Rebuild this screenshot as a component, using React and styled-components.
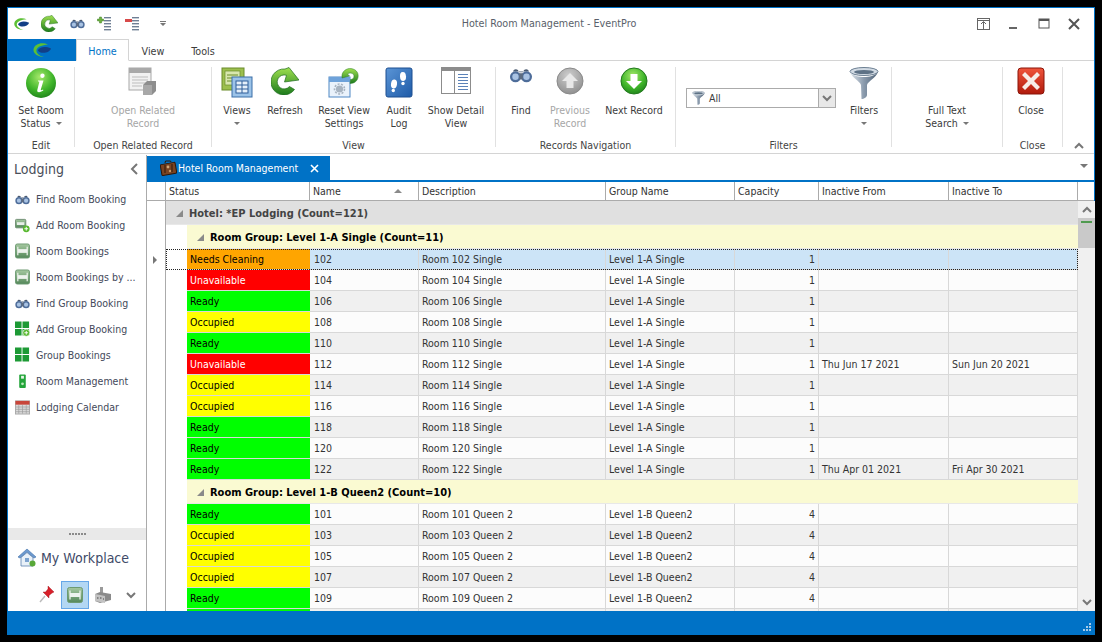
import React from 'react'
import styled, { createGlobalStyle } from 'styled-components'

const Global = createGlobalStyle`
  html, body { margin: 0; padding: 0; background: #000; }
  body { font-family: "DejaVu Sans Condensed", "DejaVu Sans", "Liberation Sans", sans-serif; font-size: 10.5px; color: #3c3c3c; }
`

const BLUE = '#0072c6'

const Page = styled.div`
  width: 1102px;
  height: 642px;
  padding: 7px;
  box-sizing: border-box;
  background: #000;
  overflow: hidden;
`

const Win = styled.div`
  width: 1088px;
  height: 628px;
  box-sizing: border-box;
  border: 1px solid ${BLUE};
  background: #fff;
  display: flex;
  flex-direction: column;
`

const TitleBar = styled.div`
  height: 31px;
  flex: none;
  display: grid;
  grid-template-columns: 1fr auto 1fr;
  align-items: center;
`

const Qat = styled.div`
  display: flex;
  align-items: center;
  gap: 8px;
  padding-left: 3px;
`

const QatSlot = styled.span`
  width: 20px;
  height: 20px;
  display: flex;
  align-items: center;
  justify-content: center;
  margin-left: ${p => p.$nudge || 0}px;
`

const Title = styled.div`
  font-size: 10.7px;
  color: #5a5f6a;
  margin-right: 4px;
`

const WinControls = styled.div`
  display: flex;
  justify-content: flex-end;
  align-items: center;
  gap: 10px;
  padding-right: 10px;
`

const TabRow = styled.div`
  height: 21px;
  flex: none;
  display: flex;
  border-bottom: 1px solid #d4d4d4;
  box-sizing: content-box;
`

const AppButton = styled.div`
  width: 68px;
  height: 22px;
  background: ${BLUE};
  display: flex;
  align-items: center;
  justify-content: center;
`

const RibbonTab = styled.div`
  width: ${p => p.$w}px;
  height: 22px;
  box-sizing: border-box;
  padding-top: 2px;
  display: flex;
  align-items: center;
  justify-content: center;
  font-size: 10.7px;
  color: ${p => (p.$on ? BLUE : '#3c3c3c')};
  ${p => p.$on && `
    border: 1px solid #d4d4d4;
    border-bottom: 1px solid #fff;
    background: #fff;
  `}
`

const Ribbon = styled.div`
  height: 92px;
  flex: none;
  display: flex;
  border-bottom: 1px solid #d4d4d4;
`

const Group = styled.div`
  width: ${p => p.$w}px;
  height: 80px;
  margin-top: 6px;
  flex: none;
  box-sizing: border-box;
  border-right: 1px solid #e1e1e1;
  display: flex;
  flex-direction: column;
`

const GroupBody = styled.div`
  flex: 1;
  display: flex;
  justify-content: ${p => p.$justify || 'flex-start'};
`

const GroupLabel = styled.div`
  height: 14px;
  line-height: 14px;
  margin-bottom: -5px;
  text-align: center;
  font-size: 10.5px;
  color: #444;
  white-space: nowrap;
`

const RibBtn = styled.div`
  width: ${p => p.$w}px;
  flex: none;
  display: flex;
  flex-direction: column;
  align-items: center;
  color: ${p => (p.$off ? '#a6a6a6' : '#3c3c3c')};
`

const IconBox = styled.div`
  height: 37px;
  width: 100%;
  display: flex;
  align-items: flex-start;
  justify-content: center;
`

const BtnText = styled.div`
  font-size: 10.5px;
  line-height: 13px;
  text-align: center;
  white-space: nowrap;
`

const Caret = styled.span`
  display: inline-block;
  width: 0;
  height: 0;
  border-left: 3px solid transparent;
  border-right: 3px solid transparent;
  border-top: 3px solid #777;
  margin-left: ${p => (p.$solo ? 0 : 5)}px;
  vertical-align: 2px;
`

const FilterWrap = styled.div`
  width: 162px;
  box-sizing: border-box;
  padding: 21px 0 0 10px;
  flex: none;
`

const Combo = styled.div`
  width: 150px;
  height: 20px;
  box-sizing: border-box;
  border: 1px solid #ababab;
  display: flex;
  align-items: center;
  font-size: 10.5px;
`

const ComboText = styled.div`
  flex: 1;
  display: flex;
  align-items: center;
  gap: 4px;
  padding-left: 5px;
`

const ComboArrow = styled.div`
  width: 16px;
  height: 18px;
  background: #e8e8e8;
  border-left: 1px solid #ababab;
  display: flex;
  align-items: center;
  justify-content: center;
`

const Collapse = styled.div`
  flex: 1;
  display: flex;
  align-items: flex-end;
  justify-content: center;
  padding: 0 0 4px 0;
`

const Main = styled.div`
  flex: 1;
  min-height: 0;
  display: flex;
`

const Sidebar = styled.div`
  width: 139px;
  flex: none;
  box-sizing: border-box;
  border-right: 1px solid #ababab;
  display: flex;
  flex-direction: column;
  margin-top: 1px;
`

const SideHead = styled.div`
  height: 28px;
  flex: none;
  display: flex;
  align-items: center;
  justify-content: space-between;
  padding: 0 7px 0 6px;
  font-size: 14px;
  color: #4a4f5a;
`

const SideList = styled.div`
  flex: 1;
  padding-top: 3px;
`

const SideItem = styled.div`
  height: 26px;
  display: flex;
  align-items: center;
  padding-left: 7px;
  gap: 6px;
  font-size: 10.5px;
  color: #44495a;
  white-space: nowrap;
`

const SideIcon = styled.span`
  width: 15px;
  height: 16px;
  flex: none;
  display: flex;
  align-items: center;
  justify-content: center;
`

const Splitter = styled.div`
  height: 12px;
  flex: none;
  background: #e9e9e9;
  display: flex;
  align-items: center;
  justify-content: center;
  gap: 1px;
`

const Dot = styled.span`
  width: 2px;
  height: 2px;
  background: #8a8a8a;
`

const Workplace = styled.div`
  height: 36px;
  flex: none;
  display: flex;
  align-items: center;
  gap: 4px;
  padding-left: 9px;
  font-size: 14px;
  color: #404a68;
`

const SideTools = styled.div`
  height: 35px;
  flex: none;
  display: flex;
  align-items: flex-start;
  padding: 5px 0 0 25px;
  box-sizing: border-box;
`

const ToolBtn = styled.div`
  width: 28px;
  height: 28px;
  flex: none;
  box-sizing: border-box;
  display: flex;
  align-items: center;
  justify-content: center;
  ${p => p.$on && `background: #b3d7f3; border: 1px solid #66a7e8;`}
`

const Content = styled.div`
  flex: 1;
  min-width: 0;
  display: flex;
  flex-direction: column;
`

const DocTabs = styled.div`
  height: 28px;
  flex: none;
  box-sizing: border-box;
  display: flex;
  align-items: flex-end;
  justify-content: space-between;
  border-bottom: 2px solid ${BLUE};
`

const DocTab = styled.div`
  width: 183px;
  height: 24px;
  background: ${BLUE};
  color: #fff;
  display: flex;
  align-items: center;
  padding-left: 13px;
  box-sizing: border-box;
  gap: 1px;
  font-size: 10.5px;
  white-space: nowrap;
`

const DocClose = styled.span`
  margin-left: auto;
  margin-right: 11px;
  display: flex;
`

const DocMenu = styled.span`
  width: 0;
  height: 0;
  border-left: 4px solid transparent;
  border-right: 4px solid transparent;
  border-top: 4px solid #777;
  margin: 0 6px 12px 0;
`

const HeaderRow = styled.div`
  height: 19px;
  flex: none;
  display: grid;
  grid-template-columns: 19px 144px 109px 187px 129px 84px 130px 129px;
  border-bottom: 1px solid #ababab;
  box-sizing: border-box;
`

const HeadCell = styled.div`
  border-right: 1px solid #ababab;
  display: flex;
  align-items: center;
  justify-content: space-between;
  padding: 0 ${p => (p.$sorted ? 18 : 3)}px 0 3px;
  font-size: 10.5px;
  color: #333;
  white-space: nowrap;
  overflow: hidden;
`

const GridBody = styled.div`
  flex: 1;
  min-height: 0;
  display: flex;
`

const Rows = styled.div`
  width: 931px;
  flex: none;
  overflow: hidden;
`

const GroupRow = styled.div`
  display: grid;
  grid-template-columns: 19px 1fr;
  height: ${p => p.$h}px;
`

const Gutter = styled.div`
  border-right: 1px solid #ababab;
  display: flex;
  align-items: center;
  justify-content: center;
`

const GroupFill = styled.div`
  background: ${p => p.$bg};
  margin-left: ${p => p.$indent}px;
  box-sizing: border-box;
  display: flex;
  align-items: center;
  gap: 6px;
  padding: 1px 0 0 ${p => p.$pad}px;
  font-weight: 700;
  font-size: 11px;
  color: ${p => p.$color};
  white-space: nowrap;
  border-bottom: 1px solid #e8e8e8;
`

const Tri = styled.span`
  width: 0;
  height: 0;
  border-left: 7px solid transparent;
  border-bottom: 7px solid #8a8a8a;
`

const Row = styled.div`
  position: relative;
  height: 21px;
  display: grid;
  grid-template-columns: 19px 21px 123px 109px 187px 129px 84px 130px 129px;
  ${p => p.$sel && `
    &::after {
      content: '';
      position: absolute;
      left: 19px;
      right: 0;
      top: 0;
      bottom: 0;
      border: 1px dotted #222;
      pointer-events: none;
    }
  `}
`

const Spacer = styled.div``

const Cell = styled.div`
  background: ${p => p.$bg};
  border-right: 1px solid #d8d8d8;
  border-bottom: 1px solid #d8d8d8;
  display: flex;
  align-items: center;
  justify-content: ${p => (p.$right ? 'flex-end' : 'flex-start')};
  padding: 0 3px 0 ${p => p.$left || 3}px;
  box-sizing: border-box;
  font-size: 10.5px;
  color: #333;
  white-space: nowrap;
  overflow: hidden;
`

const StatusCell = styled.div`
  background: ${p => p.$bg};
  color: ${p => p.$fg};
  border-bottom: 1px solid #d8d8d8;
  display: flex;
  align-items: center;
  padding-left: 3px;
  box-sizing: border-box;
  font-size: 10.5px;
`

const Scroll = styled.div`
  width: 17px;
  flex: none;
  background: #f0f0f0;
  display: flex;
  flex-direction: column;
  align-items: center;
  justify-content: space-between;
`

const ScrollTop = styled.div`
  width: 100%;
  display: flex;
  flex-direction: column;
`

const ScrollBtn = styled.div`
  height: 17px;
  display: flex;
  align-items: center;
  justify-content: center;
`

const Thumb = styled.div`
  height: 30px;
  background: #c9c9c9;
  padding: 3px 3px 0;
  box-sizing: border-box;
`

const ThumbMark = styled.div`
  height: 2px;
  background: #4f9a4f;
`

const StatusBar = styled.div`
  height: 23px;
  flex: none;
  box-sizing: border-box;
  background: ${BLUE};
  display: flex;
  justify-content: flex-end;
  align-items: flex-end;
  padding: 0 3px 3px 0;
`

/* icons */

const Defs = () => (
  <svg width="0" height="0" style={{ position: 'absolute' }}>
    <defs>
      <radialGradient id="gGreen" cx="45%" cy="30%" r="75%">
        <stop offset="0" stopColor="#a5e86a" />
        <stop offset="0.6" stopColor="#3fb52a" />
        <stop offset="1" stopColor="#1d7f1a" />
      </radialGradient>
      <linearGradient id="gArrow" x1="0" y1="0" x2="0" y2="1">
        <stop offset="0" stopColor="#9fe04f" />
        <stop offset="1" stopColor="#1c7a1c" />
      </linearGradient>
      <radialGradient id="gGrey" cx="45%" cy="30%" r="75%">
        <stop offset="0" stopColor="#cfcfcf" />
        <stop offset="1" stopColor="#8c8c8c" />
      </radialGradient>
      <linearGradient id="gBlue" x1="0" y1="0" x2="1" y2="1">
        <stop offset="0" stopColor="#5b95d6" />
        <stop offset="1" stopColor="#1e5ba8" />
      </linearGradient>
      <linearGradient id="gRed" x1="0" y1="0" x2="0" y2="1">
        <stop offset="0" stopColor="#f0553c" />
        <stop offset="1" stopColor="#b01a0c" />
      </linearGradient>
      <linearGradient id="gFunnel" x1="0" y1="0" x2="1" y2="0">
        <stop offset="0" stopColor="#dfe6ec" />
        <stop offset="0.5" stopColor="#8a9aac" />
        <stop offset="1" stopColor="#4f6378" />
      </linearGradient>
      <linearGradient id="gBed" x1="0" y1="0" x2="0" y2="1">
        <stop offset="0" stopColor="#a5c8a0" />
        <stop offset="1" stopColor="#55885a" />
      </linearGradient>
    </defs>
  </svg>
)

const Logo = ({ w = 20, h = 16, dark }) => (
  <svg width={w} height={h} viewBox="0 0 20 16">
    <path d="M16 2.5C10 -0.5 2 2 1.5 7.5 1.2 11 5 14.5 12 15 7 13.5 4 11 4.5 8 5 5 10 3 16 2.5Z" fill="#5cc035" />
    <path d="M6 8C8 5 13 4 19 6.5 18 10 13 11.5 8.5 10.5 7.2 10.2 6 9 6 8Z" fill={dark ? '#123f86' : '#1b63b8'} />
  </svg>
)

const Refresh = ({ s = 28 }) => (
  <svg width={s} height={s} viewBox="0 0 28 28">
    <path d="M23.5 22.5A13 13 0 1 1 14 2L18 0.5 28 13 13.5 15 15.5 8.3A7 7 0 1 0 18.5 19.5Z" fill="url(#gArrow)" stroke="#1f6b1f" strokeWidth="0.7" />
  </svg>
)

const Binoculars = ({ w = 24, h = 16 }) => (
  <svg width={w} height={h} viewBox="0 0 26 18">
    <path d="M4 5C5 2 8 2 9.5 3.5L11 6H15L16.5 3.5C18 2 21 2 22 5Z" fill="#4a5a70" />
    <circle cx="6.8" cy="11" r="6.2" fill="#4e6d9a" />
    <circle cx="19.2" cy="11" r="6.2" fill="#4e6d9a" />
    <circle cx="6.8" cy="11" r="3.6" fill="#a9c3e3" />
    <circle cx="19.2" cy="11" r="3.6" fill="#a9c3e3" />
    <rect x="11" y="7" width="4" height="7" fill="#5d6c80" />
  </svg>
)

const RowPlusMinus = ({ minus }) => (
  <svg width="16" height="16" viewBox="0 0 16 16">
    {[2, 5, 8, 11, 14].map(y => <rect key={y} x="7" y={y - 1} width="7" height="1.4" fill="#6f7f95" />)}
    {minus
      ? <rect x="0" y="3" width="7" height="3" fill="#d84a4a" />
      : <path d="M2.5 1H4.5V3H6.5V5H4.5V7H2.5V5H0.5V3H2.5Z" fill="#6fb33f" stroke="#3f7f25" strokeWidth="0.5" />}
  </svg>
)

const InfoBall = () => (
  <svg width="32" height="32" viewBox="0 0 32 32">
    <circle cx="16" cy="16" r="15" fill="url(#gGreen)" />
    <path d="M17.5 6.5a2.2 2.2 0 1 1-.1 4.4 2.2 2.2 0 0 1 .1-4.4ZM13 13.5H18.5L15.8 22.5C15.6 23.4 16.6 23.4 18 22.4L18.4 23.3C16.5 25.2 11.5 26.5 12.3 23L14.3 15C14.4 14.4 13.6 14.4 13 14.6Z" fill="#fff" />
  </svg>
)

const Related = () => (
  <svg width="30" height="30" viewBox="0 0 30 30">
    <rect x="1" y="1" width="22" height="22" fill="#f2f2f2" stroke="#a8a8a8" />
    <rect x="1" y="1" width="22" height="5" fill="#a9a9a9" />
    <path d="M4 10H20M4 13H20M4 16H20M4 19H14" stroke="#bdbdbd" />
    <path d="M15 18L19 14H28V24L24 28H15Z" fill="#8e8e8e" />
    <path d="M15 18H24V28H15Z" fill="#a8a8a8" />
  </svg>
)

const ViewsIcon = () => (
  <svg width="32" height="32" viewBox="0 0 32 32">
    <rect x="1" y="1" width="22" height="22" fill="#9cbf4e" stroke="#6a8c2b" />
    <rect x="4" y="4" width="15" height="14" fill="#d8e7ae" stroke="#6a8c2b" strokeWidth="0.7" />
    <path d="M6 8H17M6 11H17M6 14H17" stroke="#6a8c2b" />
    <rect x="11" y="10" width="20" height="20" fill="#9cc3e8" stroke="#3a6ea8" />
    <rect x="15" y="14" width="12" height="12" fill="#e6f0fa" stroke="#2f5f9a" />
    <path d="M15 18H27M15 22H27M21 14V26" stroke="#2f5f9a" />
  </svg>
)

const ResetIcon = () => (
  <svg width="32" height="32" viewBox="0 0 32 32">
    <rect x="1" y="10" width="21" height="20" fill="#eaf2fb" stroke="#4f87c4" />
    <rect x="1" y="10" width="21" height="5" fill="#6ea2da" />
    <circle cx="11.5" cy="22" r="3.6" fill="#a7b3c0" />
    <circle cx="11.5" cy="22" r="5" fill="none" stroke="#a7b3c0" strokeWidth="1.6" strokeDasharray="2 1.5" />
    <path d="M14 8C15 3 20 0.5 25 2 30 3.5 31.5 9 29 13 27.5 15.5 25 16.5 22 16.5L22.5 12.5C24.5 12.5 26 11.5 26 9 26 6.5 22 5 19.5 7L21.5 9 14 11Z" fill="url(#gArrow)" stroke="#2a7a2a" strokeWidth="0.5" />
  </svg>
)

const AuditIcon = () => (
  <svg width="28" height="32" viewBox="0 0 28 32">
    <rect x="1" y="1" width="26" height="29" rx="2" fill="url(#gBlue)" stroke="#1d4f90" />
    <ellipse cx="9" cy="17" rx="3" ry="4.5" fill="#fff" transform="rotate(8 9 17)" />
    <ellipse cx="8.3" cy="23.5" rx="1.7" ry="1.8" fill="#fff" />
    <ellipse cx="18" cy="9.5" rx="3" ry="4.5" fill="#fff" transform="rotate(-4 18 9.5)" />
    <ellipse cx="18" cy="16.5" rx="1.7" ry="1.8" fill="#fff" />
  </svg>
)

const DetailIcon = () => (
  <svg width="30" height="28" viewBox="0 0 30 28">
    <rect x="0.5" y="0.5" width="29" height="26" fill="#fff" stroke="#8c8c8c" />
    <rect x="0" y="0" width="30" height="4" fill="#8c8c8c" />
    <path d="M13.5 4V27" stroke="#8c8c8c" />
    <path d="M17 7.5H27M17 10.5H27M17 13.5H27M17 16.5H27M17 19.5H27M17 22.5H27" stroke="#5b82b8" />
  </svg>
)

const ArrowBall = ({ up }) => (
  <svg width="28" height="28" viewBox="0 0 28 28">
    <circle cx="14" cy="14" r="13" fill={up ? 'url(#gGrey)' : 'url(#gGreen)'} stroke={up ? '#8a8a8a' : '#237a1e'} />
    {up
      ? <path d="M14 6L22 14H17.5V21H10.5V14H6Z" fill="#e8e8e8" />
      : <path d="M14 22L22 14H17.5V7H10.5V14H6Z" fill="#fff" />}
  </svg>
)

const Funnel = ({ s = 30 }) => (
  <svg width={s} height={s * 1.1} viewBox="0 0 30 33">
    <ellipse cx="15" cy="4.5" rx="14" ry="4" fill="#d2dbe4" stroke="#6c7f92" />
    <ellipse cx="15" cy="5" rx="10" ry="2" fill="#5e7286" />
    <path d="M1 5C3 11 11 14 12 18L12.5 32C15 32 18 30 18 28L18 18C19 14 27 11 29 5 26 9 20 10 15 10 10 10 4 9 1 5Z" fill="url(#gFunnel)" />
  </svg>
)

const CloseIcon = () => (
  <svg width="28" height="28" viewBox="0 0 28 28">
    <rect x="1" y="1" width="26" height="26" rx="3" fill="url(#gRed)" stroke="#8a1408" />
    <path d="M8 5L14 11 20 5 23 8 17 14 23 20 20 23 14 17 8 23 5 20 11 14 5 8Z" fill="#f7ede8" />
  </svg>
)

const Chevron = ({ dir = 'down', color = '#777' }) => (
  <svg width="10" height="7" viewBox="0 0 10 7">
    <path d={dir === 'down' ? 'M1 1L5 5 9 1' : 'M1 6L5 2 9 6'} fill="none" stroke={color} strokeWidth="2" />
  </svg>
)

const AddBed = () => (
  <svg width="16" height="16" viewBox="0 0 16 16">
    <rect x="0.5" y="2" width="11" height="9" rx="1" fill="url(#gBed)" stroke="#6d8c70" />
    <rect x="2" y="5" width="8" height="3" fill="#e8efe8" />
    <circle cx="12" cy="12" r="3.6" fill="#58b82f" />
    <path d="M10 12H14M12 10V14" stroke="#fff" />
  </svg>
)

const Bed = ({ s = 16 }) => (
  <svg width={s} height={s} viewBox="0 0 16 16">
    <rect x="0.5" y="0.5" width="15" height="15" rx="2" fill="url(#gBed)" stroke="#6d9a72" />
    <rect x="3" y="6" width="10" height="4" fill="#eef3ee" />
    <path d="M3 3.5V12.5M13 3.5V12.5" stroke="#eef3ee" strokeWidth="1.3" />
  </svg>
)

const GroupGrid = ({ add }) => (
  <svg width="16" height="16" viewBox="0 0 16 16">
    <path d="M0 0H7V7H0ZM8 0H15V7H8ZM0 8H7V15H0ZM8 8H15V15H8Z" fill="#1d9a35" />
    {add && <circle cx="12" cy="12" r="3.8" fill="#58b82f" stroke="#fff" strokeWidth="0.7" />}
    {add && <path d="M10 12H14M12 10V14" stroke="#fff" />}
  </svg>
)

const RoomMgmt = () => (
  <svg width="16" height="16" viewBox="0 0 16 16">
    <rect x="4.5" y="1" width="7" height="14.5" rx="1" fill="#23a43a" />
    <rect x="6.5" y="2.5" width="3" height="3" fill="#e8f5e8" />
    <circle cx="8" cy="11" r="1.5" fill="#b9e8b9" />
  </svg>
)

const Calendar = () => (
  <svg width="16" height="16" viewBox="0 0 16 16">
    <rect x="0.5" y="1.5" width="15" height="14" fill="#d9d9d9" stroke="#a8a8a8" />
    <rect x="0.5" y="1.5" width="15" height="4" fill="#c8453a" />
    <path d="M1 8H15M1 10.5H15M1 13H15M4 6V15M8 6V15M12 6V15" stroke="#9a9a9a" strokeWidth="0.7" />
  </svg>
)

const House = () => (
  <svg width="20" height="20" viewBox="0 0 20 20">
    <path d="M1 9L10 1 19 9 17 10 10 4 3 10Z" fill="#6d9ad0" stroke="#3f6ea8" strokeWidth="0.6" />
    <path d="M4 9.5L10 4.5 16 9.5V18H4Z" fill="#e8f0f8" stroke="#5a80ad" strokeWidth="0.8" />
    <rect x="8" y="10" width="4" height="4" fill="#7ca3cf" />
    <circle cx="15.5" cy="15.5" r="3" fill="#58a838" />
  </svg>
)

const Pin = () => (
  <svg width="16" height="18" viewBox="0 0 16 18">
    <path d="M1 16L6 10" stroke="#bbb" strokeWidth="1.4" />
    <path d="M9 0L15 6 13 7 10 9.5 10 12 4 6 6.5 6 9 3Z" fill="#d8202a" stroke="#9a1018" strokeWidth="0.4" />
  </svg>
)

const Factory = () => (
  <svg width="18" height="18" viewBox="0 0 18 18">
    <path d="M6 1H9V7H6Z" fill="#9a9a9a" />
    <path d="M1 8L6 6 17 8V14L6 17 1 15Z" fill="#8a8a8a" />
    <path d="M1 8L11 10V17L1 15Z" fill="#c2c2c2" />
    <path d="M3 12H4.5M6 12H7.5M9 13H10" stroke="#444" />
  </svg>
)

const Suitcase = () => (
  <svg width="17" height="16" viewBox="0 0 17 16">
    <rect x="1" y="3.5" width="15" height="11" rx="1" fill="#7a4422" stroke="#2f1708" transform="rotate(-10 8 9)" />
    <path d="M5 3L5.5 1H10.5L11 2" fill="none" stroke="#2f1708" />
    <path d="M5 5V13M12 4V12" stroke="#2f1708" />
    <circle cx="8" cy="7" r="1.4" fill="#d2a878" />
    <circle cx="10" cy="11" r="1.2" fill="#c79a6a" />
  </svg>
)

const sideItems = [
  ['Find Room Booking', <Binoculars w={15} h={11} />],
  ['Add Room Booking', <AddBed />],
  ['Room Bookings', <Bed />],
  ['Room Bookings by ...', <Bed />],
  ['Find Group Booking', <Binoculars w={15} h={11} />],
  ['Add Group Booking', <GroupGrid add />],
  ['Group Bookings', <GroupGrid />],
  ['Room Management', <RoomMgmt />],
  ['Lodging Calendar', <Calendar />],
]

const STATUS = {
  N: ['Needs Cleaning', '#ffa500', '#000'],
  U: ['Unavailable', '#ff0000', '#fff'],
  R: ['Ready', '#00ff00', '#000'],
  O: ['Occupied', '#ffff00', '#000'],
}

const singles = [
  ['N', 102], ['U', 104], ['R', 106], ['O', 108], ['R', 110],
  ['U', 112, 'Thu Jun 17 2021', 'Sun Jun 20 2021'], ['O', 114], ['O', 116], ['R', 118], ['R', 120],
  ['R', 122, 'Thu Apr 01 2021', 'Fri Apr 30 2021'],
]

const queens = [['R', 101], ['O', 103], ['O', 105], ['O', 107], ['R', 109], ['R', 111]]

const Marker = styled.span`
  width: 0;
  height: 0;
  border-top: 4px solid transparent;
  border-bottom: 4px solid transparent;
  border-left: 4px solid #777;
  margin-right: 2px;
`

const SortMark = styled.span`
  width: 0;
  height: 0;
  border-left: 4px solid transparent;
  border-right: 4px solid transparent;
  border-bottom: 4px solid #8a8a8a;
  margin-right: -2px;
`

const DataRow = ({ status, no, kind, group, cap, from, to, index, sel }) => {
  const [label, bg, fg] = STATUS[status]
  const fill = sel ? '#cce4f7' : index % 2 ? '#fcfcfc' : '#f0f0f0'
  return (
    <Row $sel={sel}>
      <Gutter>{sel && <Marker />}</Gutter>
      <Spacer />
      <StatusCell $bg={bg} $fg={fg}>{label}</StatusCell>
      <Cell $bg={fill} $left={4}>{no}</Cell>
      <Cell $bg={fill}>Room {no} {kind}</Cell>
      <Cell $bg={fill}>{group}</Cell>
      <Cell $bg={fill} $right>{cap}</Cell>
      <Cell $bg={fill}>{from}</Cell>
      <Cell $bg={fill}>{to}</Cell>
    </Row>
  )
}

function App() {
  return (
    <Page>
      <Global />
      <Defs />
      <Win>
        <TitleBar>
          <Qat>
            <QatSlot><Logo w={17} h={14} dark /></QatSlot>
            <QatSlot><Refresh s={17} /></QatSlot>
            <QatSlot><Binoculars w={15} h={11} /></QatSlot>
            <QatSlot><RowPlusMinus /></QatSlot>
            <QatSlot><RowPlusMinus minus /></QatSlot>
            <QatSlot $nudge={2}>
              <svg width="6" height="6" viewBox="0 0 6 6"><path d="M0 0H6V1H0ZM0 2H6L3 5Z" fill="#777" /></svg>
            </QatSlot>
          </Qat>
          <Title>Hotel Room Management - EventPro</Title>
          <WinControls>
            <svg width="20" height="14" viewBox="0 0 20 14">
              <rect x="3.5" y="1.5" width="12" height="11" fill="none" stroke="#666" />
              <path d="M3 3.5H16M9.5 12V5M7 7L9.5 4.5 12 7" fill="none" stroke="#666" />
            </svg>
            <svg width="20" height="14" viewBox="0 0 20 14"><rect x="5" y="10" width="8" height="2" fill="#666" /></svg>
            <svg width="20" height="14" viewBox="0 0 20 14">
              <rect x="5" y="2" width="10" height="9" fill="none" stroke="#555" />
              <rect x="5" y="2" width="10" height="2" fill="#555" />
            </svg>
            <svg width="20" height="14" viewBox="0 0 20 14">
              <path d="M5 2L15 12M15 2L5 12" stroke="#555" strokeWidth="2" />
            </svg>
          </WinControls>
        </TitleBar>
        <TabRow>
          <AppButton><Logo w={22} h={16} dark /></AppButton>
          <RibbonTab $w={53} $on>Home</RibbonTab>
          <RibbonTab $w={48}>View</RibbonTab>
          <RibbonTab $w={52}>Tools</RibbonTab>
        </TabRow>
        <Ribbon>
          <Group $w={67}>
            <GroupBody>
              <RibBtn $w={66}>
                <IconBox><InfoBall /></IconBox>
                <BtnText>Set Room<br />Status<Caret /></BtnText>
              </RibBtn>
            </GroupBody>
            <GroupLabel>Edit</GroupLabel>
          </Group>
          <Group $w={137}>
            <GroupBody $justify="center">
              <RibBtn $w={90} $off>
                <IconBox><Related /></IconBox>
                <BtnText>Open Related<br />Record</BtnText>
              </RibBtn>
            </GroupBody>
            <GroupLabel>Open Related Record</GroupLabel>
          </Group>
          <Group $w={284}>
            <GroupBody>
              <RibBtn $w={50}>
                <IconBox><ViewsIcon /></IconBox>
                <BtnText>Views<br /><Caret $solo /></BtnText>
              </RibBtn>
              <RibBtn $w={46}>
                <IconBox><Refresh /></IconBox>
                <BtnText>Refresh</BtnText>
              </RibBtn>
              <RibBtn $w={72}>
                <IconBox><ResetIcon /></IconBox>
                <BtnText>Reset View<br />Settings</BtnText>
              </RibBtn>
              <RibBtn $w={38}>
                <IconBox><AuditIcon /></IconBox>
                <BtnText>Audit<br />Log</BtnText>
              </RibBtn>
              <RibBtn $w={76}>
                <IconBox><DetailIcon /></IconBox>
                <BtnText>Show Detail<br />View</BtnText>
              </RibBtn>
            </GroupBody>
            <GroupLabel>View</GroupLabel>
          </Group>
          <Group $w={180}>
            <GroupBody>
              <RibBtn $w={50}>
                <IconBox><Binoculars /></IconBox>
                <BtnText>Find</BtnText>
              </RibBtn>
              <RibBtn $w={48} $off>
                <IconBox><ArrowBall up /></IconBox>
                <BtnText>Previous<br />Record</BtnText>
              </RibBtn>
              <RibBtn $w={80}>
                <IconBox><ArrowBall /></IconBox>
                <BtnText>Next Record</BtnText>
              </RibBtn>
            </GroupBody>
            <GroupLabel>Records Navigation</GroupLabel>
          </Group>
          <Group $w={216}>
            <GroupBody>
              <FilterWrap>
                <Combo>
                  <ComboText><Funnel s={13} />All</ComboText>
                  <ComboArrow><Chevron /></ComboArrow>
                </Combo>
              </FilterWrap>
              <RibBtn $w={52}>
                <IconBox><Funnel /></IconBox>
                <BtnText>Filters<br /><Caret $solo /></BtnText>
              </RibBtn>
            </GroupBody>
            <GroupLabel>Filters</GroupLabel>
          </Group>
          <Group $w={111}>
            <GroupBody>
              <RibBtn $w={110}>
                <IconBox />
                <BtnText>Full Text<br />Search<Caret /></BtnText>
              </RibBtn>
            </GroupBody>
          </Group>
          <Group $w={60}>
            <GroupBody>
              <RibBtn $w={56}>
                <IconBox><CloseIcon /></IconBox>
                <BtnText>Close</BtnText>
              </RibBtn>
            </GroupBody>
            <GroupLabel>Close</GroupLabel>
          </Group>
          <Collapse><Chevron dir="up" /></Collapse>
        </Ribbon>
        <Main>
          <Sidebar>
            <SideHead>
              Lodging
              <svg width="9" height="12" viewBox="0 0 9 12"><path d="M7 1L2 6 7 11" fill="none" stroke="#777" strokeWidth="2" /></svg>
            </SideHead>
            <SideList>
              {sideItems.map(([label, icon]) => (
                <SideItem key={label}><SideIcon>{icon}</SideIcon>{label}</SideItem>
              ))}
            </SideList>
            <Splitter>{[0, 1, 2, 3, 4, 5].map(i => <Dot key={i} />)}</Splitter>
            <Workplace><House />My Workplace</Workplace>
            <SideTools>
              <ToolBtn><Pin /></ToolBtn>
              <ToolBtn $on><Bed s={16} /></ToolBtn>
              <ToolBtn><Factory /></ToolBtn>
              <ToolBtn><Chevron /></ToolBtn>
            </SideTools>
          </Sidebar>
          <Content>
            <DocTabs>
              <DocTab>
                <Suitcase />
                Hotel Room Management
                <DocClose>
                  <svg width="9" height="9" viewBox="0 0 9 9"><path d="M1 1L8 8M8 1L1 8" stroke="#fff" strokeWidth="1.6" /></svg>
                </DocClose>
              </DocTab>
              <DocMenu />
            </DocTabs>
            <HeaderRow>
              <HeadCell />
              <HeadCell>Status</HeadCell>
              <HeadCell $sorted>Name<SortMark /></HeadCell>
              <HeadCell>Description</HeadCell>
              <HeadCell>Group Name</HeadCell>
              <HeadCell>Capacity</HeadCell>
              <HeadCell>Inactive From</HeadCell>
              <HeadCell>Inactive To</HeadCell>
            </HeaderRow>
            <GridBody>
              <Rows>
                <GroupRow $h={24}>
                  <Gutter />
                  <GroupFill $bg="#e0e0e0" $indent={0} $pad={10} $color="#444">
                    <Tri />Hotel: *EP Lodging (Count=121)
                  </GroupFill>
                </GroupRow>
                <GroupRow $h={24}>
                  <Gutter />
                  <GroupFill $bg="#fafad2" $indent={21} $pad={10} $color="#000">
                    <Tri />Room Group: Level 1-A Single (Count=11)
                  </GroupFill>
                </GroupRow>
                {singles.map(([status, no, from, to], i) => (
                  <DataRow key={no} status={status} no={no} kind="Single" group="Level 1-A Single" cap={1} from={from} to={to} index={i} sel={i === 0} />
                ))}
                <GroupRow $h={24}>
                  <Gutter />
                  <GroupFill $bg="#fafad2" $indent={21} $pad={10} $color="#000">
                    <Tri />Room Group: Level 1-B Queen2 (Count=10)
                  </GroupFill>
                </GroupRow>
                {queens.map(([status, no], i) => (
                  <DataRow key={no} status={status} no={no} kind="Queen 2" group="Level 1-B Queen2" cap={4} index={i + 11} />
                ))}
              </Rows>
              <Scroll>
                <ScrollTop>
                  <ScrollBtn><Chevron dir="up" /></ScrollBtn>
                  <Thumb><ThumbMark /></Thumb>
                </ScrollTop>
                <ScrollBtn><Chevron /></ScrollBtn>
              </Scroll>
            </GridBody>
          </Content>
        </Main>
        <StatusBar>
          <svg width="8" height="8" viewBox="0 0 8 8">
            <path d="M6 0H8V2H6ZM3 3H5V5H3ZM6 3H8V5H6ZM0 6H2V8H0ZM3 6H5V8H3ZM6 6H8V8H6Z" fill="#a8cbe8" />
          </svg>
        </StatusBar>
      </Win>
    </Page>
  )
}

export default App
